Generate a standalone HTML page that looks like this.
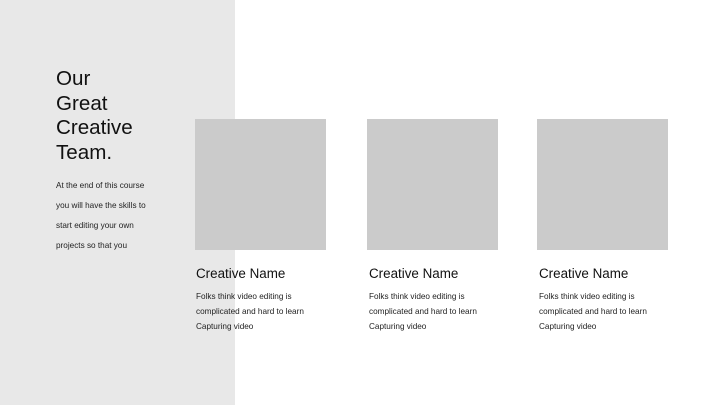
<!DOCTYPE html>
<html><head><style>
body{margin:0;width:720px;height:405px;position:relative;background:#fff;font-family:"Liberation Sans",Arial,sans-serif;color:#111;overflow:hidden}
.side{position:absolute;left:0;top:0;width:235px;height:405px;background:#e8e8e8}
.t{position:absolute;left:56px;top:67px;font-size:20.6px;line-height:24.5px}
.p{position:absolute;left:56px;top:176px;font-size:8.2px;line-height:20px;color:#222}
.b{position:absolute;top:119px;width:131px;height:131px;background:#cbcbcb}
.n{position:absolute;top:266px;font-size:13.4px;line-height:16px}
.d{position:absolute;top:289px;font-size:8.2px;line-height:15px;color:#222}
</style></head><body>
<div class="side"></div>
<div class="t">Our<br>Great<br>Creative<br>Team.</div>
<div class="p">At the end of this course<br>you will have the skills to<br>start editing your own<br>projects so that you</div>
<div class="b" style="left:195px"></div>
<div class="b" style="left:367px"></div>
<div class="b" style="left:537px"></div>
<div class="n" style="left:196px">Creative Name</div>
<div class="n" style="left:369px">Creative Name</div>
<div class="n" style="left:539px">Creative Name</div>
<div class="d" style="left:196px">Folks think video editing is<br>complicated and hard to learn<br>Capturing video</div>
<div class="d" style="left:369px">Folks think video editing is<br>complicated and hard to learn<br>Capturing video</div>
<div class="d" style="left:539px">Folks think video editing is<br>complicated and hard to learn<br>Capturing video</div>
</body></html>
